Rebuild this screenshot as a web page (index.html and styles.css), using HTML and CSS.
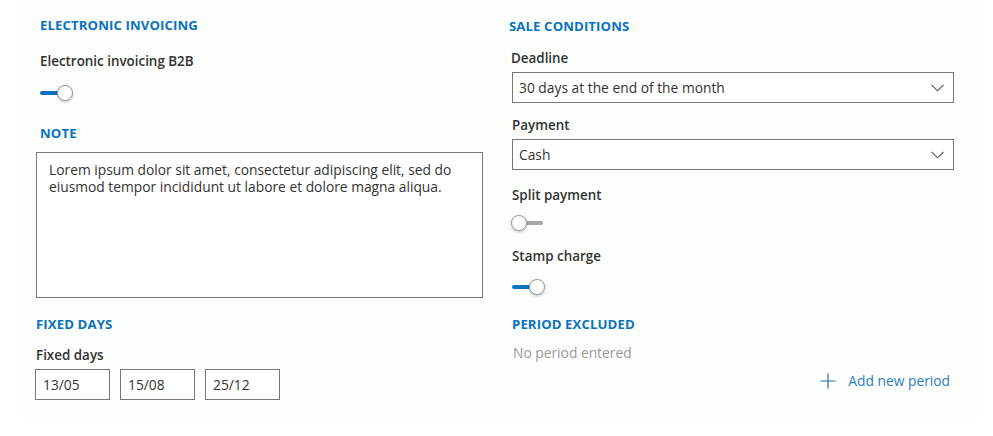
FILE: index.html
```html
<!DOCTYPE html>
<html lang="en">
<head>
<meta charset="utf-8">
<title>Invoice settings</title>
<link rel="stylesheet" href="styles.css">
</head>
<body>
<div class="panel">
  <div class="col col-left">
    <h2 class="section-title t-einv">ELECTRONIC INVOICING</h2>
    <div class="label l-b2b">Electronic invoicing B2B</div>
    <div class="toggle on t-b2b"><span class="track"></span><span class="thumb"></span></div>
    <h2 class="section-title t-note">NOTE</h2>
    <div class="textarea">Lorem ipsum dolor sit amet, consectetur adipiscing elit, sed do eiusmod tempor incididunt ut labore et dolore magna aliqua.</div>
    <h2 class="section-title t-fixed">FIXED DAYS</h2>
    <div class="label l-fixed">Fixed days</div>
    <div class="days">
      <div class="day">13/05</div>
      <div class="day">15/08</div>
      <div class="day">25/12</div>
    </div>
  </div>
  <div class="col col-right">
    <h2 class="section-title t-sale">SALE CONDITIONS</h2>
    <div class="label l-deadline">Deadline</div>
    <div class="select">
      <span>30 days at the end of the month</span>
      <svg class="chev" width="13" height="8" viewBox="0 0 13 8"><path d="M0.5 0.8 L6.5 6.8 L12.5 0.8" fill="none" stroke="#555" stroke-width="1.1"/></svg>
    </div>
    <div class="label l-payment">Payment</div>
    <div class="select">
      <span>Cash</span>
      <svg class="chev" width="13" height="8" viewBox="0 0 13 8"><path d="M0.5 0.8 L6.5 6.8 L12.5 0.8" fill="none" stroke="#555" stroke-width="1.1"/></svg>
    </div>
    <div class="label l-split">Split payment</div>
    <div class="toggle off t-split"><span class="track"></span><span class="thumb"></span></div>
    <div class="label l-stamp">Stamp charge</div>
    <div class="toggle on t-stamp"><span class="track"></span><span class="thumb"></span></div>
    <h2 class="section-title t-period">PERIOD EXCLUDED</h2>
    <div class="empty">No period entered</div>
    <div class="add-row">
      <a class="add-link" href="#">
        <svg width="16" height="16" viewBox="0 0 16 16"><path d="M8 0.5 V15.5 M0.5 8 H15.5" stroke="#2f6fa8" stroke-width="1.2" fill="none"/></svg>
        <span>Add new period</span>
      </a>
    </div>
  </div>
</div>
</body>
</html>
```

FILE: styles.css
```css
* { box-sizing: border-box; }
html, body { margin: 0; padding: 0; background: #ffffff; }
body {
  font-family: "Open Sans", "Noto Sans", "Liberation Sans", sans-serif;
  color: #333333;
  font-size: 13.8px;
}
.panel {
  margin-left: 20px;
  width: 960px;
  height: 418px;
  background: #fcfefc;
  padding: 0 20px;
  display: grid;
  grid-template-columns: 443px 442px;
  column-gap: 29px;
}
.col { display: flex; flex-direction: column; align-items: flex-start; }

.section-title {
  margin: 0;
  font-size: 13.2px;
  line-height: 16px;
  font-weight: 700;
  letter-spacing: 0.1px;
  color: #0a72c0;
}
.label {
  font-size: 13.4px;
  line-height: 18px;
  font-weight: 600;
  color: #333333;
}

/* left column */
.t-einv { margin-top: 17px; }
.l-b2b { margin-top: 19px; }
.t-b2b { margin-top: 14px; }
.t-note { margin-top: 23px; }
.textarea {
  margin-top: 11px;
  margin-left: -4px;
  width: 447px;
  height: 146px;
  border: 1px solid #777777;
  background: #ffffff;
  padding: 8px 12px;
  font-size: 13.8px;
  line-height: 17px;
  color: #333333;
}
.t-fixed { margin-top: 18px; margin-left: -4px; }
.l-fixed { margin-top: 14px; margin-left: -4px; }
.days { margin-top: 5px; margin-left: -5px; display: flex; gap: 10px; }
.day {
  width: 75px;
  height: 31px;
  border: 1px solid #777777;
  background: #ffffff;
  padding: 0 7px;
  line-height: 29px;
  font-size: 13.8px;
  color: #333333;
}

/* right column */
.t-sale { margin-top: 18px; margin-left: -3px; }
.l-deadline { margin-top: 15px; margin-left: -1px; }
.select {
  margin-top: 5px;
  width: 442px;
  height: 31px;
  border: 1px solid #777777;
  background: #ffffff;
  padding: 0 8px 0 6px;
  display: flex;
  align-items: center;
  justify-content: space-between;
  font-size: 13.8px;
  color: #333333;
}
.chev { display: block; margin-right: 1px; }
.l-payment { margin-top: 13px; }
.l-split { margin-top: 16px; }
.t-split { margin-top: 10px; }
.l-stamp { margin-top: 15px; }
.t-stamp { margin-top: 13px; }
.t-period { margin-top: 20px; }
.empty {
  margin-top: 12px;
  margin-left: 1px;
  font-size: 13.8px;
  line-height: 18px;
  color: #9a9a9a;
}
.add-row { margin-top: 10px; width: 442px; display: flex; justify-content: flex-end; }
.add-link {
  margin-right: 4px;
  display: flex;
  align-items: center;
  gap: 12px;
  color: #2f7cc0;
  text-decoration: none;
  font-size: 13.8px;
  line-height: 18px;
}
.add-link svg { display: block; }

/* toggles */
.toggle { position: relative; width: 34px; height: 18px; }
.toggle .track {
  position: absolute;
  top: 7px;
  height: 4px;
  border-radius: 2px;
}
.toggle .thumb {
  position: absolute;
  top: 1px;
  width: 16px;
  height: 16px;
  border-radius: 50%;
  background: #ffffff;
  border: 1px solid #999999;
  box-shadow: 0 1px 3px rgba(0,0,0,0.25);
}
.toggle.on .track { left: 0; width: 22px; background: #0a72c0; }
.toggle.on .thumb { left: 17px; }
.toggle.off .track { left: 8px; width: 23px; background: #a8a8a8; }
.toggle.off .thumb { left: -1px; }
```
